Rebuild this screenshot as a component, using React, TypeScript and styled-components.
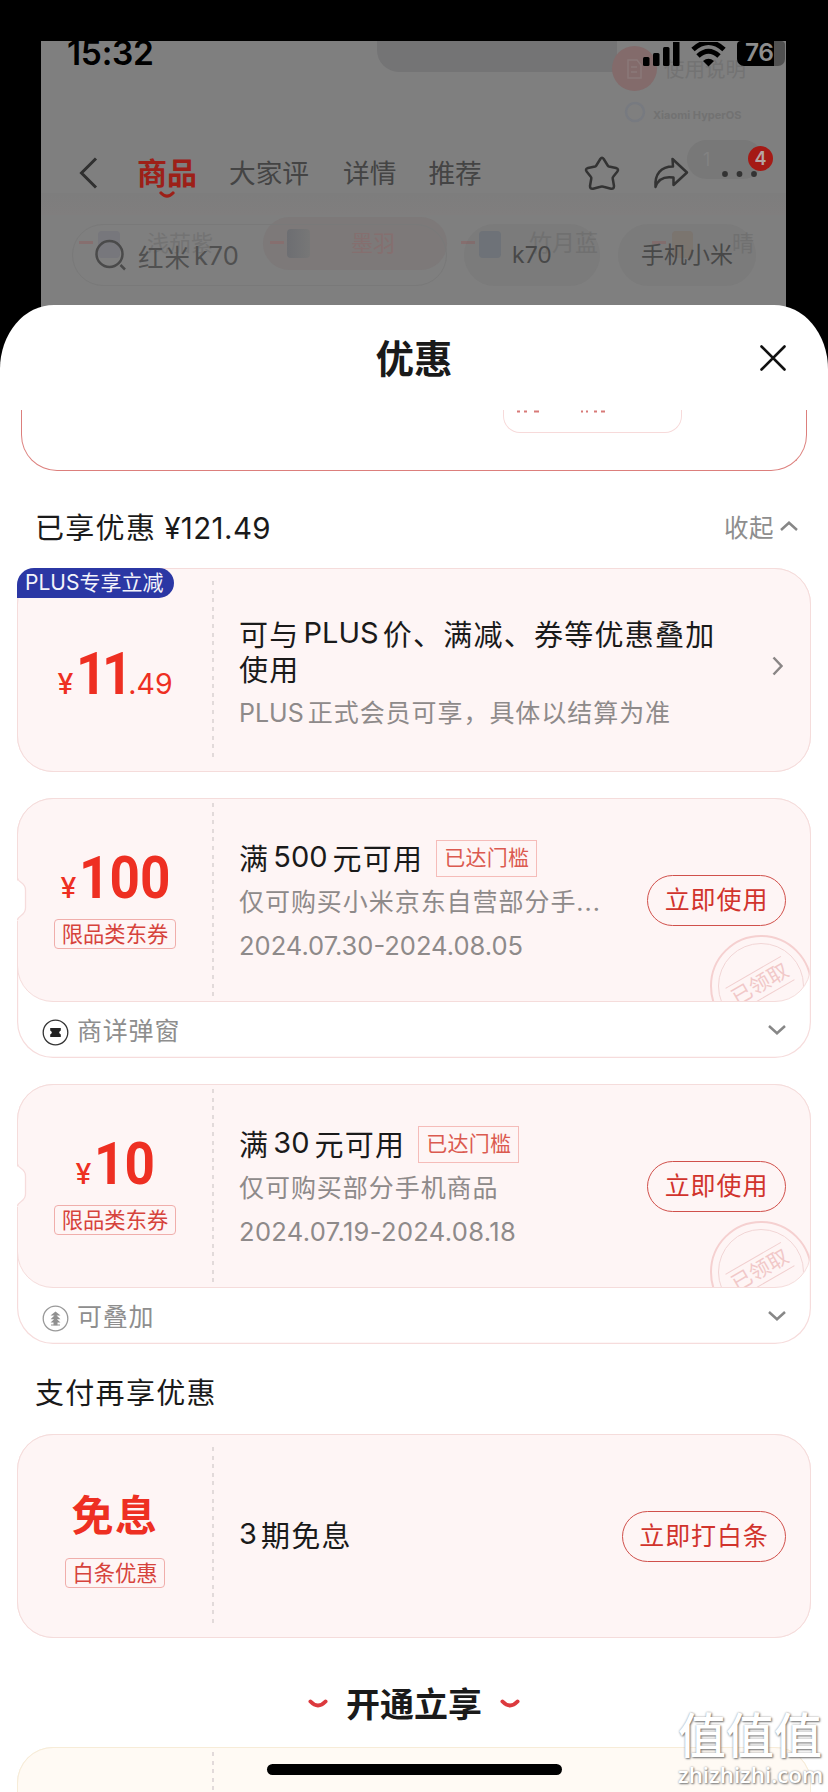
import React from "react";
import styled, { createGlobalStyle } from "styled-components";

const Global = createGlobalStyle`
  * { box-sizing: border-box; }
  body {
    margin: 0;
    background: #000;
    font-family: Inter, "Noto Sans CJK SC", sans-serif;
    color: #1a1a1a;
  }
`;

const Screen = styled.main`
  position: relative;
  width: 828px;
  height: 1792px;
  overflow: hidden;
  background: #000;
  display: flex;
  flex-direction: column;
`;

/* ---------- dimmed product page ---------- */

const Backdrop = styled.header`
  position: relative;
  isolation: isolate;
  height: 305px;
  margin: 41px 42px -41px 41px;
  background: #7f7f7f;
  overflow: hidden;
  flex: none;
`;

const StatusBar = styled.div`
  display: flex;
  align-items: center;
  height: 27px;
  padding-left: 26px;
  color: #000;
`;

const Clock = styled.div`
  flex: 1;
  margin-top: -4px;
  font-size: 33.5px;
  font-weight: 600;
  line-height: 24px;
  letter-spacing: -0.3px;
`;

const Battery = styled.div`
  width: 48px;
  height: 25px;
  margin: -2px 1px 0 11px;
  border-radius: 4px 4px 7px 7px;
  background: linear-gradient(90deg, #000 37px, #505050 37px);
  color: #8d8d8d;
  font-size: 24.5px;
  font-weight: 600;
  line-height: 23px;
  padding-left: 8px;
  letter-spacing: -0.6px;
`;

const NavBar = styled.nav`
  display: flex;
  align-items: center;
  height: 60px;
  margin-top: 75px;
  padding: 0 30px 0 37px;
  color: #3d3d3d;
`;

const Tab = styled.div<{ $active?: boolean; $gap: number }>`
  display: flex;
  flex-direction: column;
  align-items: center;
  margin-left: ${(p) => p.$gap}px;
  font-size: ${(p) => (p.$active ? 30 : 26.7)}px;
  font-weight: ${(p) => (p.$active ? 700 : 400)};
  line-height: 36px;
  color: ${(p) => (p.$active ? "#9d2018" : "#444")};
  svg { margin: 0 0 -8px; }
`;

const NavIcons = styled.div`
  display: flex;
  align-items: center;
  margin-left: auto;
  gap: 33px;
`;

const More = styled.div`
  position: relative;
  width: 34px;
  height: 34px;
`;

const Count = styled.span`
  position: absolute;
  left: 26px;
  top: -10px;
  width: 25px;
  height: 25px;
  border-radius: 50%;
  background: #a51a15;
  color: #b5a5a3;
  font-size: 18px;
  font-weight: 600;
  line-height: 25px;
  text-align: center;
`;

const SearchRow = styled.div`
  display: flex;
  height: 62px;
  margin: 21px 0 0 31px;
`;

const SearchBox = styled.div`
  display: flex;
  align-items: center;
  width: 375px;
  padding-left: 22px;
  border: 1px solid #797979;
  border-radius: 31px;
  font-size: 25.5px;
  letter-spacing: 1px;
  color: #505050;
  svg { margin-right: 11px; }
`;

const HotWord = styled.div<{ $w: number; $gap: number }>`
  width: ${(p) => p.$w}px;
  margin-left: ${(p) => p.$gap}px;
  border-radius: 31px;
  background: rgba(96, 96, 96, 0.14);
  font-size: 23px;
  line-height: 62px;
  text-align: center;
  color: #484848;
`;

/* faint remains of the gallery behind the header, free-floating */
const Ghost = styled.div<{ $x: number; $y: number; $w?: number; $h?: number; $bg?: string; $r?: string; $c?: string; $fs?: number }>`
  position: absolute;
  z-index: -1;
  left: ${(p) => p.$x}px;
  top: ${(p) => p.$y}px;
  width: ${(p) => (p.$w ? p.$w + "px" : "auto")};
  height: ${(p) => (p.$h ? p.$h + "px" : "auto")};
  background: ${(p) => p.$bg ?? "none"};
  border-radius: ${(p) => p.$r ?? "0"};
  color: ${(p) => p.$c ?? "#737373"};
  font-size: ${(p) => p.$fs ?? 22}px;
  line-height: 1.2;
  white-space: nowrap;
`;

/* ---------- sheet ---------- */

const Sheet = styled.section`
  position: relative;
  flex: 1;
  background: #fff;
  border-radius: 54px 54px 0 0 / 64px 64px 0 0;
  display: flex;
  flex-direction: column;
`;

const SheetHead = styled.div`
  display: flex;
  align-items: center;
  justify-content: center;
  position: relative;
  height: 105px;
  padding-bottom: 4px;
  flex: none;
  font-size: 38.5px;
  font-weight: 700;
`;

const Close = styled.button`
  position: absolute;
  right: 41px;
  top: 39px;
  width: 28px;
  height: 28px;
  padding: 0;
  border: 0;
  background: none;
  svg { display: block; }
`;

const ScrolledCard = styled.div`
  height: 61px;
  margin: 0 21px;
  border: 1.5px solid #dc7f7c;
  border-top: 0;
  border-radius: 0 0 36px 36px;
  flex: none;
  padding-left: 481px;
`;

const ScrolledPill = styled.div`
  width: 179px;
  height: 23px;
  border: 1px solid #f7dada;
  border-top: 0;
  border-radius: 0 0 17px 17px;
  svg { display: block; margin-left: 13px; }
`;

const SectionRow = styled.div<{ $top: number }>`
  display: flex;
  justify-content: space-between;
  align-items: center;
  height: 40px;
  margin: ${(p) => p.$top}px 30px 0 35px;
  font-size: 29px;
  letter-spacing: 1.3px;
  flex: none;
`;

const Amount = styled.span`
  margin-left: 8px;
  font-size: 29.5px;
  letter-spacing: 0.4px;
`;

const Collapse = styled.span`
  display: flex;
  align-items: center;
  font-size: 24.5px;
  letter-spacing: 0.5px;
  color: #8e8e8e;
  svg { margin-left: 6px; }
`;

const Coupon = styled.article<{ $top: number; $line?: string }>`
  position: relative;
  margin: ${(p) => p.$top}px 17px 0;
  border-radius: 36px;
  flex: none;
  box-shadow: inset 0 0 0 1.2px ${(p) => p.$line ?? "#f6dcdc"};
`;

const Ticket = styled.div<{ $bg?: string; $line?: string; $h?: number }>`
  position: relative;
  display: flex;
  height: ${(p) => p.$h ?? 204}px;
  border: 1.2px solid ${(p) => p.$line ?? "#f5dcdb"};
  border-radius: 36px;
  background: ${(p) => p.$bg ?? "#fef5f5"};
  overflow: hidden;
`;

const Stub = styled.div`
  width: 194px;
  display: flex;
  flex-direction: column;
  align-items: center;
  flex: none;
`;

const Perforation = styled.div<{ $inset: number }>`
  width: 2px;
  margin: ${(p) => p.$inset}px 0;
  background: repeating-linear-gradient(#e2dada 0 4px, transparent 4px 8.6px);
  flex: none;
`;

const PlusBadge = styled.div`
  position: absolute;
  z-index: 1;
  left: 0;
  top: 0;
  width: 157px;
  height: 30px;
  border-radius: 17px 15px 15px 0;
  background: #2b37a4;
  color: #f3f3fb;
  font-size: 21px;
  line-height: 30px;
  padding-left: 8px;
  white-space: nowrap;
`;

const Price = styled.div<{ $top: number }>`
  display: flex;
  align-items: baseline;
  margin-top: ${(p) => p.$top}px;
  height: 62px;
  color: #ee2f22;
  font-size: 28.5px;
  line-height: 62px;
`;

const Yen = styled.span`
  font-weight: 500;
  margin-right: 3px;
`;

const Digits = styled.span<{ $w: number; $tight?: boolean }>`
  display: inline-block;
  width: ${(p) => p.$w}px;
  font-family: Roboto, sans-serif;
  font-size: 59px;
  font-weight: 700;
  letter-spacing: ${(p) => (p.$tight ? -5 : 0)}px;
  transform: scaleX(0.9);
  transform-origin: 0 50%;
  white-space: nowrap;
`;

const FreeText = styled.div`
  margin-top: 50px;
  font-size: 42px;
  font-weight: 700;
  line-height: 62px;
  letter-spacing: 1.5px;
  color: #ee2f22;
`;

const KindTag = styled.div<{ $w: number; $top: number }>`
  width: ${(p) => p.$w}px;
  height: 30px;
  margin-top: ${(p) => p.$top}px;
  border: 1px solid #f0aeab;
  border-radius: 4px;
  color: #d6433c;
  font-size: 21.3px;
  line-height: 28px;
  text-align: center;
  white-space: nowrap;
`;

const Detail = styled.div<{ $top: number }>`
  flex: 1;
  min-width: 0;
  padding: ${(p) => p.$top}px 0 0 25px;
  color: #8e8a8a;
  font-size: 25px;
  letter-spacing: 0.95px;
  white-space: nowrap;
`;

const Title = styled.div<{ $lh: number }>`
  display: flex;
  align-items: center;
  height: ${(p) => p.$lh}px;
  color: #1a1a1a;
  font-size: 29px;
  letter-spacing: 1.25px;
`;

const Latin = styled.span<{ $l?: number; $r?: number; $ls?: number }>`
  margin: 0 ${(p) => p.$r ?? 4}px 0 ${(p) => p.$l ?? 4}px;
  letter-spacing: ${(p) => p.$ls ?? 0}px;
`;

const Reached = styled.span`
  height: 37px;
  width: 101px;
  margin: 3px 0 0 13px;
  border: 1.5px solid #f5bcb9;
  color: #db5a50;
  font-size: 21px;
  line-height: 34px;
  letter-spacing: 0.2px;
  text-align: center;
`;

const Line = styled.div<{ $h: number }>`
  height: ${(p) => p.$h}px;
  line-height: ${(p) => p.$h}px;
`;

const DateLine = styled(Line)<{ $ls: number }>`
  font-size: 25.5px;
  letter-spacing: ${(p) => p.$ls}px;
`;

const Action = styled.button<{ $w: number }>`
  align-self: center;
  width: ${(p) => p.$w}px;
  height: 51px;
  margin-right: 24px;
  padding: 0;
  border: 1.4px solid #d0504b;
  border-radius: 26px;
  background: none;
  color: #d1332c;
  font: inherit;
  font-size: 25px;
  line-height: 46px;
  letter-spacing: 0.9px;
  white-space: nowrap;
  flex: none;
`;

const Arrow = styled.div`
  display: flex;
  align-items: center;
  width: 38px;
  flex: none;
  padding-bottom: 8px;
`;

const Notch = styled.svg`
  position: absolute;
  left: -1px;
  top: 79px;
  z-index: 1;
`;

const Stamp = styled.div`
  position: absolute;
  right: -2px;
  bottom: -36px;
  width: 102px;
  height: 102px;
  border: 2.5px solid #f5d0d0;
  border-radius: 50%;
  display: flex;
  align-items: center;
  justify-content: center;
  color: #f1c8c8;
  &::before {
    content: "";
    position: absolute;
    inset: 6px;
    border: 1.5px solid #f1d5d5;
    border-radius: 50%;
  }
`;

const StampText = styled.span`
  width: 64px;
  border: solid #f1cfcf;
  border-width: 1.5px 0;
  font-size: 20.5px;
  line-height: 26px;
  text-align: center;
  white-space: nowrap;
  transform: translate(-1px, -2px) rotate(-30deg);
`;

const Foot = styled.div`
  display: flex;
  align-items: center;
  height: 56px;
  padding: 0 25px 3px 25px;
  color: #8e8e8e;
  font-size: 25px;
  letter-spacing: 0.8px;
  .mark { margin: 8px 8px 0 0; }
  .more { margin: 3px 0 0 auto; }
`;

const OpenRow = styled.div`
  display: flex;
  align-items: center;
  justify-content: center;
  gap: 18px;
  height: 50px;
  margin-top: 39px;
  font-size: 34px;
  font-weight: 700;
  flex: none;
  svg { margin-top: 4px; }
`;

const HomeBar = styled.div`
  position: absolute;
  left: 267px;
  bottom: 17px;
  width: 295px;
  height: 11px;
  border-radius: 6px;
  background: #000;
`;

const Watermark = styled.div`
  position: absolute;
  right: 6px;
  bottom: 4px;
  width: 144px;
  color: #fff;
  text-align: center;
  text-shadow: 1px 1px 2px #777, 0 0 2px #999;
  white-space: nowrap;
`;

const MarkName = styled.div`
  font-size: 48px;
  font-weight: 500;
  line-height: 50px;
`;

const MarkSite = styled.div`
  font-family: "Open Sans", sans-serif;
  font-size: 22.3px;
  line-height: 27px;
  font-weight: 600;
`;

const Smile = ({ w, color }: { w: number; color: string }) => (
  <svg width={w} height={w / 2} viewBox="0 0 20 10" fill="none" stroke={color} strokeWidth="4" strokeLinecap="round">
    <path d="M2.500 2.500Q10 10.500 17.500 2.500" />
  </svg>
);

const Chevron = ({ up }: { up?: boolean }) => (
  <svg className="more" width="18" height="10" viewBox="0 0 18 10" fill="none" stroke="#878787" strokeWidth="2.500">
    <path d={up ? "M1 9 9 1.800 17 9" : "M1 1 9 8.200 17 1"} />
  </svg>
);

const PopupIcon = () => (
  <svg className="mark" width="27" height="27" viewBox="0 0 27 27">
    <circle cx="13.500" cy="13.500" r="12.300" fill="none" stroke="#333" strokeWidth="1.300" />
    <path d="M8.200 9H18.800V11.500Q15.500 13.500 18.800 15.500V18H8.200V15.500Q11.500 13.500 8.200 11.500Z" fill="#222" />
  </svg>
);

const StackIcon = () => (
  <svg className="mark" width="27" height="27" viewBox="0 0 27 27">
    <circle cx="13.500" cy="13.500" r="12.300" fill="none" stroke="#999" strokeWidth="1.300" />
    <path d="M13.500 6.500 18.500 10.500H8.500ZM13.500 9.500 18.500 14.200H8.500ZM13.500 13 18.500 17.500H8.500ZM11.500 17H15.500V20.200H11.500Z" fill="#909090" />
    <path d="M9 20H18" stroke="#909090" />
  </svg>
);

type CouponProps = {
  value: string;
  valueWidth: number;
  limit: string;
  desc: string;
  period: string;
  tracking: number;
  footer: string;
  icon: React.ReactNode;
};

const DongCoupon = (p: CouponProps) => (
  <Coupon $top={26}>
    <Ticket>
      <Stub>
        <Price $top={48}>
          <Yen>¥</Yen>
          <Digits $w={p.valueWidth}>{p.value}</Digits>
        </Price>
        <KindTag $w={122} $top={10}>限品类东券</KindTag>
      </Stub>
      <Perforation $inset={4} />
      <Detail $top={39}>
        <Title $lh={37}>
          满<Latin $l={4} $r={5}>{p.limit}</Latin>元可用<Reached>已达门槛</Reached>
        </Title>
        <Line $h={54}>{p.desc}</Line>
        <DateLine $h={33} $ls={p.tracking}>{p.period}</DateLine>
      </Detail>
      <Action $w={139}>立即使用</Action>
      <Stamp><StampText>已领取</StampText></Stamp>
    </Ticket>
    <Notch width="11" height="44" viewBox="0 0 11 44">
      <path d="M0 0C0 6 9.500 5 9.500 13V31C9.500 39 1.500 38 1.500 44H0Z" fill="#fff" />
      <path d="M1.500 1C2 6 9.500 5 9.500 13V31C9.500 39 2 38 1.500 43" fill="none" stroke="#f6dcdc" strokeWidth="1.300" />
    </Notch>
    <Foot>{p.icon}{p.footer}<Chevron /></Foot>
  </Coupon>
);

export default function App() {
  return (
    <Screen>
      <Global />
      <Backdrop>
        <Ghost $x={336} $y={-10} $w={240} $h={41} $bg="#747475" $r="0 0 0 22px" />
        <Ghost $x={571} $y={5} $w={45} $h={45} $bg="#836b6b" $r="50%" />
        <Ghost $x={586} $y={17} $w={15} $h={20} $c="#8b7878">
          <svg width="15" height="20" fill="none" stroke="#8b7979" strokeWidth="1.500"><path d="M1 1H10L14 6V19H1ZM4 8H10M4 13H10" /></svg>
        </Ghost>
        <Ghost $x={623} $y={17} $fs={20.5}>使用说明</Ghost>
        <Ghost $x={583} $y={60} $w={22} $h={22}>
          <svg width="22" height="22"><circle cx="11" cy="11" r="9" fill="none" stroke="#777a80" strokeWidth="2.500" /></svg>
        </Ghost>
        <Ghost $x={612} $y={68} $fs={11} $c="#727272"><b>Xiaomi HyperOS</b></Ghost>
        <Ghost $x={646} $y={99} $w={76} $h={39} $bg="#787878" $r="20px" />
        <Ghost $x={662} $y={108} $fs={18} $c="#828282">1</Ghost>
        <Ghost $x={0} $y={152} $w={745} $h={22} $bg="linear-gradient(#7d7d7d,#807e7e)" />
        <Ghost $x={222} $y={176} $w={184} $h={53} $bg="#7d7979" $r="27px" />
        <Ghost $x={246} $y={188} $w={23} $h={29} $bg="linear-gradient(90deg,#6d6e72,#777)" $r="4px" />
        <Ghost $x={57} $y={190} $w={22} $h={27} $bg="#77777c" $r="4px" />
        <Ghost $x={438} $y={190} $w={22} $h={27} $bg="#70757c" $r="4px" />
        <Ghost $x={631} $y={190} $w={21} $h={27} $bg="#7f7872" $r="4px" />
        <Ghost $x={38} $y={200} $w={14} $h={3} $bg="#866f6f" />
        <Ghost $x={229} $y={200} $w={14} $h={3} $bg="#866f6f" />
        <Ghost $x={420} $y={200} $w={14} $h={3} $bg="#866f6f" />
        <Ghost $x={611} $y={200} $w={14} $h={3} $bg="#866f6f" />
        <Ghost $x={106} $y={189}>浅茄紫</Ghost>
        <Ghost $x={310} $y={189} $c="#856f6f">墨羽</Ghost>
        <Ghost $x={488} $y={189} $fs={23}>竹月蓝</Ghost>
        <Ghost $x={691} $y={189}>晴</Ghost>
        <StatusBar>
          <Clock>15:32</Clock>
          <svg width="84" height="26" viewBox="0 0 84 26">
            <rect x="1" y="15" width="6.500" height="9" rx="1.500" />
            <rect x="11" y="11" width="6.500" height="13" rx="1.500" />
            <rect x="21" y="5" width="6.500" height="19" rx="1.500" />
            <rect x="31" y="-4" width="6.500" height="28" rx="1.500" />
            <g fill="none" stroke="#000" strokeWidth="5">
              <path d="M51 7.500Q66.500 -6.500 82 7.500" />
              <path d="M56 14Q66.500 4.500 77 14" />
            </g>
            <path d="M61 19Q66.500 14.500 72 19L66.500 24.500Z" />
          </svg>
          <Battery>76</Battery>
        </StatusBar>
        <NavBar>
          <svg width="20" height="32" fill="none" stroke="#303030" strokeWidth="3"><path d="M18 1.500 3.500 16 18 30.500" /></svg>
          <Tab $active $gap={39}>商品<Smile w={16} color="#9d2018" /></Tab>
          <Tab $gap={32}>大家评</Tab>
          <Tab $gap={34}>详情</Tab>
          <Tab $gap={32}>推荐</Tab>
          <NavIcons>
            <svg width="36" height="35" viewBox="0 0 36 35" fill="none" stroke="#333" strokeWidth="2.500" strokeLinejoin="round">
              <path d="M16.300 3Q18 0.500 19.700 3L23.700 9.500Q24.200 10.300 25 10.500L32 12Q35.300 13 33.200 15.700L29.200 20.700Q28.500 21.500 28.700 22.500L30 30Q30 33.200 27 32.700L19.500 30.800Q18 30.300 16.500 30.800L9 32.700Q6 33.200 6 30L7.300 22.500Q7.500 21.500 6.800 20.700L2.800 15.700Q0.700 13 4 12L11 10.500Q11.800 10.300 12.300 9.500Z" />
            </svg>
            <svg width="36" height="32" viewBox="0 0 36 32" fill="none" stroke="#333" strokeWidth="2.500" strokeLinejoin="round">
              <path d="M19.500 2 34 15.500 20.500 28V20.500C11 19 5 22 2.500 30C1.500 17 8 9.500 20 9.500Z" />
            </svg>
            <More>
              <svg width="36" height="34"><circle cx="3" cy="18" r="2.900" fill="#333" /><circle cx="17.500" cy="18" r="2.900" fill="#333" /><circle cx="32" cy="18" r="2.900" fill="#333" /></svg>
              <Count>4</Count>
            </More>
          </NavIcons>
        </NavBar>
        <SearchRow>
          <SearchBox>
            <svg width="32" height="32" fill="none" stroke="#4a4a4a" strokeWidth="2.500"><circle cx="14.500" cy="15" r="13" /><path d="M25.500 26 30 30.500" /></svg>
            红米<Latin $l={3} $ls={0.4}>k70</Latin>
          </SearchBox>
          <HotWord $w={136} $gap={17}>k70</HotWord>
          <HotWord $w={138} $gap={18}>手机小米</HotWord>
        </SearchRow>
      </Backdrop>

      <Sheet>
        <SheetHead>
          优惠
          <Close aria-label="关闭">
            <svg width="28" height="28" stroke="#111" strokeWidth="2.600" strokeLinecap="round"><path d="M2.500 2.500 25.500 25.500M25.500 2.500 2.500 25.500" /></svg>
          </Close>
        </SheetHead>

        <ScrolledCard>
          <ScrolledPill>
            <svg width="95" height="4" stroke="#d87a78" strokeWidth="2"><path d="M0 1.500H3M7 1.500H10M17 1.500H22M64 1.500H66M69 1.500H71M77 1.500H80M84 1.500H88" /></svg>
          </ScrolledPill>
        </ScrolledCard>

        <SectionRow $top={35}>
          <span>已享优惠<Amount>¥121.49</Amount></span>
          <Collapse>收起<Chevron up /></Collapse>
        </SectionRow>

        <Coupon $top={22}>
          <PlusBadge>PLUS专享立减</PlusBadge>
          <Ticket>
            <Stub>
              <Price $top={74}>
                <Yen>¥</Yen>
                <Digits $w={52} $tight>11</Digits>
                .49
              </Price>
            </Stub>
            <Perforation $inset={12} />
            <Detail $top={46}>
              <Title $lh={35}>可与<Latin>PLUS</Latin>价、满减、券等优惠叠加</Title>
              <Title $lh={35}>使用</Title>
              <Line $h={56}><Latin $l={0}>PLUS</Latin>正式会员可享，具体以结算为准</Line>
            </Detail>
            <Arrow>
              <svg width="12" height="20" fill="none" stroke="#8a8686" strokeWidth="2.500"><path d="M1.500 1.500 9.500 10 1.500 18.500" /></svg>
            </Arrow>
          </Ticket>
        </Coupon>

        <DongCoupon
          value="100"
          valueWidth={90}
          limit="500"
          desc="仅可购买小米京东自营部分手..."
          period="2024.07.30-2024.08.05"
          tracking={0}
          footer="商详弹窗"
          icon={<PopupIcon />}
        />
        <DongCoupon
          value="10"
          valueWidth={60}
          limit="30"
          desc="仅可购买部分手机商品"
          period="2024.07.19-2024.08.18"
          tracking={0.35}
          footer="可叠加"
          icon={<StackIcon />}
        />

        <SectionRow $top={27}><span>支付再享优惠</span></SectionRow>

        <Coupon $top={23}>
          <Ticket>
            <Stub>
              <FreeText>免息</FreeText>
              <KindTag $w={100} $top={11}>白条优惠</KindTag>
            </Stub>
            <Perforation $inset={12} />
            <Detail $top={80}>
              <Title $lh={37}><Latin $l={0}>3</Latin>期免息</Title>
            </Detail>
            <Action $w={164}>立即打白条</Action>
          </Ticket>
        </Coupon>

        <OpenRow>
          <Smile w={20} color="#dc3a3e" />
          开通立享
          <Smile w={20} color="#dc3a3e" />
        </OpenRow>

        <Coupon $top={20} $line="#f7ecd8">
          <Ticket $bg="#fffaf4" $line="#f7ecd8">
            <Stub />
            <Perforation $inset={4} />
          </Ticket>
        </Coupon>
      </Sheet>

      <HomeBar />
      <Watermark>
        <MarkName>值值值</MarkName>
        <MarkSite>zhizhizhi.com</MarkSite>
      </Watermark>
    </Screen>
  );
}
